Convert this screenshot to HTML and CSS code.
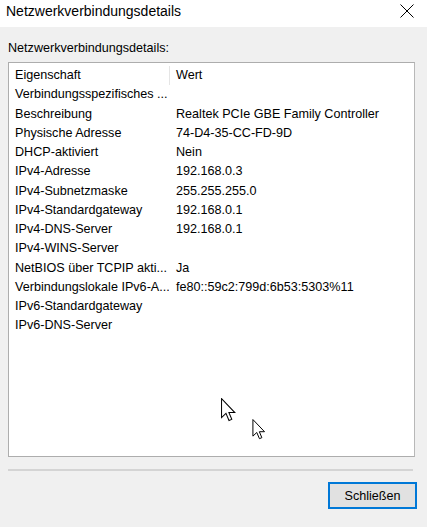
FILE: index.html
```html
<!DOCTYPE html>
<html lang="de">
<head>
<meta charset="utf-8">
<title>Netzwerkverbindungsdetails</title>
<link rel="stylesheet" href="styles.css">
</head>
<body>
<div class="window">
  <div class="titlebar">
    <span class="title">Netzwerkverbindungsdetails</span>
    <svg class="close" width="14" height="14" viewBox="0 0 14 14"><path d="M0.5 0.5 L13.5 13.5 M13.5 0.5 L0.5 13.5" stroke="#000" stroke-width="1" fill="none"/></svg>
  </div>
  <div class="content">
    <div class="label">Netzwerkverbindungsdetails:</div>
    <div class="listbox">
      <div class="row header"><div class="c1">Eigenschaft</div><div class="c2">Wert</div></div>
      <div class="row"><div class="c1">Verbindungsspezifisches ...</div><div class="c2"></div></div>
      <div class="row"><div class="c1">Beschreibung</div><div class="c2">Realtek PCIe GBE Family Controller</div></div>
      <div class="row"><div class="c1">Physische Adresse</div><div class="c2">74-D4-35-CC-FD-9D</div></div>
      <div class="row"><div class="c1">DHCP-aktiviert</div><div class="c2">Nein</div></div>
      <div class="row"><div class="c1">IPv4-Adresse</div><div class="c2">192.168.0.3</div></div>
      <div class="row"><div class="c1">IPv4-Subnetzmaske</div><div class="c2">255.255.255.0</div></div>
      <div class="row"><div class="c1">IPv4-Standardgateway</div><div class="c2">192.168.0.1</div></div>
      <div class="row"><div class="c1">IPv4-DNS-Server</div><div class="c2">192.168.0.1</div></div>
      <div class="row"><div class="c1">IPv4-WINS-Server</div><div class="c2"></div></div>
      <div class="row"><div class="c1">NetBIOS über TCPIP akti...</div><div class="c2">Ja</div></div>
      <div class="row"><div class="c1">Verbindungslokale IPv6-A...</div><div class="c2">fe80::59c2:799d:6b53:5303%11</div></div>
      <div class="row"><div class="c1">IPv6-Standardgateway</div><div class="c2"></div></div>
      <div class="row"><div class="c1">IPv6-DNS-Server</div><div class="c2"></div></div>
      <svg class="cursor cursor-a" width="17" height="24" viewBox="0 0 12 19"><path d="M0.5 0.5 L0.5 15.5 L4 12.2 L6.4 17.8 L8.6 16.9 L6.3 11.5 L11 11.5 Z" fill="#fff" stroke="#000" stroke-width="0.8" stroke-linejoin="miter"/></svg>
      <svg class="cursor cursor-b" width="14" height="21" viewBox="0 0 12 19"><path d="M0.5 0.5 L0.5 15.5 L4 12.2 L6.4 17.8 L8.6 16.9 L6.3 11.5 L11 11.5 Z" fill="#fff" stroke="#000" stroke-width="0.9" stroke-linejoin="miter"/></svg>
    </div>
    <div class="separator"></div>
    <div class="actions">
      <button class="btn">Schließen</button>
    </div>
  </div>
</div>
</body>
</html>
```
FILE: styles.css
```css
html, body {
  margin: 0;
  padding: 0;
  background: #ffffff;
}
.window {
  width: 427px;
  height: 527px;
  display: flex;
  flex-direction: column;
  font-family: "Liberation Sans", Arial, sans-serif;
  color: #000;
}
.titlebar {
  height: 27px;
  background: #ffffff;
  display: flex;
  align-items: flex-start;
  justify-content: space-between;
  padding: 3px 13px 0 6px;
  box-sizing: border-box;
}
.title {
  font-family: "Liberation Sans", Arial, sans-serif;
  font-size: 14px;
  line-height: 16px;
  color: #000;
}
.close {
  display: block;
  margin-top: 1px;
}
.content {
  flex: 1;
  background: #f0f0f0;
  padding: 14px 12px 0 8px;
  display: flex;
  flex-direction: column;
}
.label {
  font-size: 12.6px;
  line-height: 15px;
  height: 21px;
}
.listbox {
  position: relative;
  height: 395px;
  width: 407px;
  box-sizing: border-box;
  background: #fff;
  border: 1px solid #adadad;
  border-right-color: #b8b8b8;
  padding-top: 2.5px;
}
.row {
  display: flex;
  height: 19.25px;
  align-items: center;
  font-size: 12.6px;
  white-space: nowrap;
}
.c1 {
  width: 154px;
  padding-left: 6px;
  overflow: hidden;
}
.c2 {
  padding-left: 7px;
}
.header .c2 {
  border-left: 1px solid #e5e5e5;
  height: 100%;
  display: flex;
  align-items: center;
  padding-left: 6px;
}
.cursor {
  position: absolute;
}
.cursor-a {
  left: 211px;
  top: 335px;
}
.cursor-b {
  left: 243px;
  top: 356px;
}
.separator {
  margin-top: 12px;
  width: 405px;
  height: 2px;
  background: #d4d4d4;
}
.actions {
  display: flex;
  justify-content: flex-end;
  padding-top: 11px;
  margin-right: -2px;
}
.btn {
  width: 89px;
  height: 27px;
  box-sizing: border-box;
  background: #e1e1e1;
  border: 2px solid #0078d7;
  font-family: "Liberation Sans", Arial, sans-serif;
  font-size: 12.6px;
  color: #000;
  padding: 0;
}
```
